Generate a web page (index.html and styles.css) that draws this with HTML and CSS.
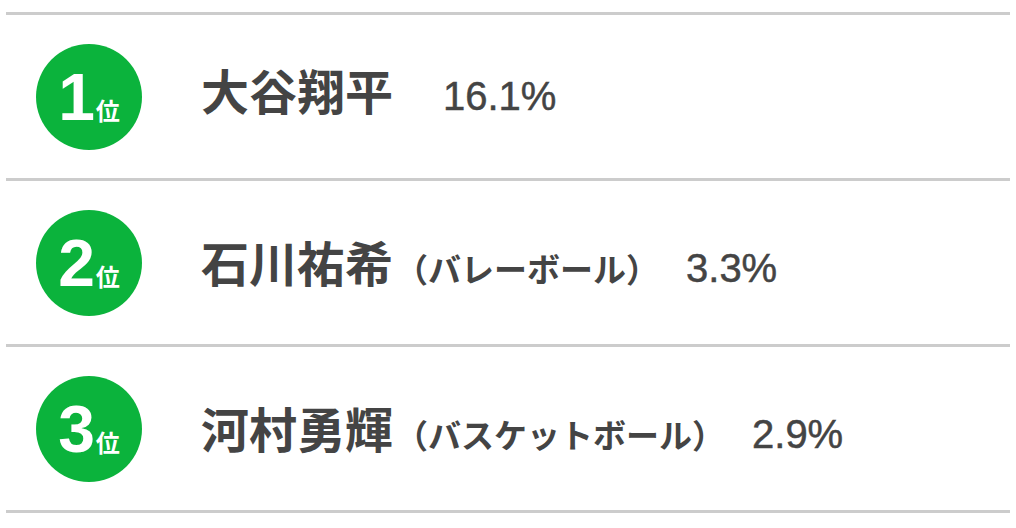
FILE: index.html
```html
<!DOCTYPE html>
<html lang="ja">
<head>
<meta charset="utf-8">
<title>ランキング</title>
<link rel="stylesheet" href="styles.css">
</head>
<body>
<ol class="ranking">
  <li class="rank-row">
    <div class="badge"><span class="badge-label"><span class="badge-num">1</span><span class="badge-unit">位</span></span></div>
    <div class="info info-solo"><span class="name">大谷翔平</span><span class="pct pct-solo">16.1%</span></div>
  </li>
  <li class="rank-row">
    <div class="badge"><span class="badge-label"><span class="badge-num">2</span><span class="badge-unit">位</span></span></div>
    <div class="info"><span class="name">石川祐希</span><span class="sport">（バレーボール）</span><span class="pct">3.3%</span></div>
  </li>
  <li class="rank-row">
    <div class="badge"><span class="badge-label"><span class="badge-num">3</span><span class="badge-unit">位</span></span></div>
    <div class="info"><span class="name">河村勇輝</span><span class="sport">（バスケットボール）</span><span class="pct">2.9%</span></div>
  </li>
</ol>
</body>
</html>
```

FILE: styles.css
```css
html, body {
  margin: 0;
  padding: 0;
  background: #ffffff;
}

body {
  padding-top: 12px;
  font-family: "Noto Sans CJK JP", "Noto Sans", sans-serif;
  color: #444444;
}

.ranking {
  list-style: none;
  margin: 0 6px;
  padding: 0;
  border-top: 3px solid #cccccc;
}

.rank-row {
  display: flex;
  align-items: center;
  height: 163px;
  padding-left: 30px;
  border-bottom: 3px solid #cccccc;
}

.badge {
  flex: none;
  width: 106px;
  height: 106px;
  border-radius: 50%;
  background: #0bb33c;
  color: #ffffff;
  display: flex;
  align-items: center;
  justify-content: center;
}

.badge-label {
  display: block;
  line-height: 66px;
  height: 66px;
  white-space: nowrap;
  font-family: "Liberation Sans", Arial, sans-serif;
  font-size: 66px;
  font-weight: 700;
}

.badge-num {
  font-family: "Liberation Sans", Arial, sans-serif;
  font-weight: 700;
  font-size: 66px;
}

.badge-unit {
  font-family: "Noto Sans CJK JP", sans-serif;
  font-weight: 700;
  font-size: 24px;
  line-height: 1;
  margin-left: 1px;
}

.info {
  margin-left: 59px;
  white-space: nowrap;
  line-height: 1.2;
}

.info-solo {
  margin-bottom: 12px;
}

.name {
  font-family: "Noto Sans CJK JP", sans-serif;
  font-weight: 700;
  font-size: 48px;
}

.sport {
  font-family: "Noto Sans CJK JP", sans-serif;
  font-weight: 700;
  font-size: 33px;
  margin-left: 2px;
}

.pct {
  font-family: "Liberation Sans", Arial, sans-serif;
  font-size: 40px;
  margin-left: 27px;
  -webkit-text-stroke: 0.5px #444444;
}

.pct-solo {
  margin-left: 50px;
}
```
